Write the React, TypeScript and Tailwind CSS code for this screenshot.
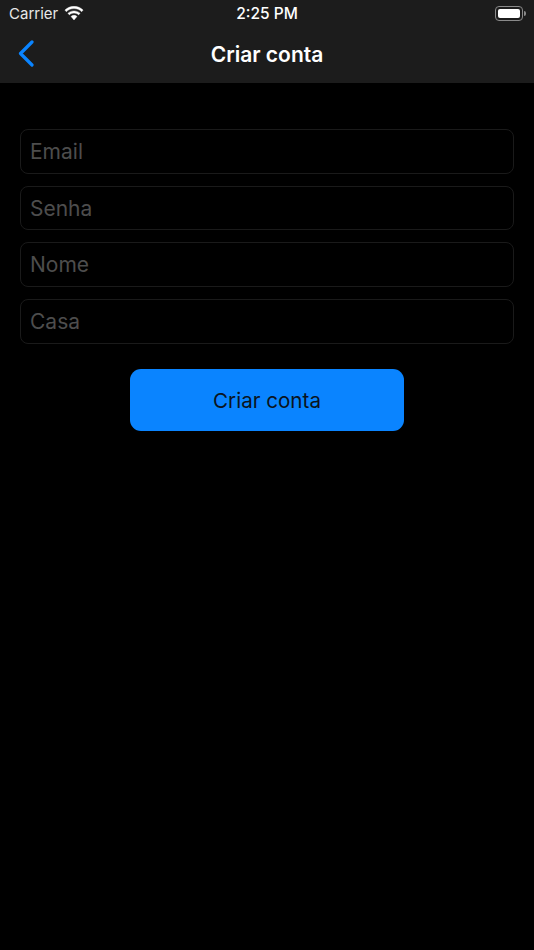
export default function App() {
  const fields = ["Email", "Senha", "Nome", "Casa"];
  return (
    <div className="w-[534px] h-[950px] bg-black flex flex-col font-['Inter','Liberation_Sans',sans-serif] overflow-hidden">
      <header className="h-[83px] bg-[#1c1c1c] flex flex-col shrink-0">
        <div className="h-[28px] px-[9px] grid grid-cols-3 items-center text-white text-[15px]">
          <div className="flex items-center gap-[6px]">
            <span className="text-[#e8e8e8]">Carrier</span>
            <svg width="20" height="15" viewBox="0 0 20 15" fill="white" stroke="white" strokeWidth="0.400" className="-mt-[2px]">
              <path d="M10 2.600c3 0 5.600 1.100 7.700 3.100l1.400-1.600C16.700 1.700 13.500.3 10 .3S3.300 1.700.9 4.100l1.400 1.600C4.400 3.700 7 2.600 10 2.600z" />
              <path d="M10 7.100c1.800 0 3.400.7 4.600 1.800l1.500-1.600C14.500 5.800 12.400 4.900 10 4.900s-4.500.9-6.100 2.400l1.500 1.600C6.600 7.800 8.200 7.100 10 7.100z" />
              <path d="M10 9.300c-1.200 0-2.200.5-3 1.200L10 14l3-3.500c-.8-.7-1.800-1.200-3-1.200z" />
            </svg>
          </div>
          <div className="text-center font-medium text-[15.500px]">2:25 PM</div>
          <div className="flex justify-end -mr-px">
            <div className="flex items-center -mt-[2px]">
              <div className="w-[28px] h-[15px] rounded-[4px] border border-[#8a8a8a] p-[2px]">
                <div className="w-full h-full rounded-[2px] bg-white" />
              </div>
              <div className="w-[2px] h-[5px] ml-px rounded-r-sm bg-[#8a8a8a]" />
            </div>
          </div>
        </div>
        <div className="flex-1 relative flex items-center justify-center">
          <svg className="absolute left-[17px] top-[11px]" width="18" height="28" viewBox="0 0 18 28" fill="none" stroke="#0a84ff" strokeWidth="3.200" strokeLinecap="round" strokeLinejoin="round">
            <path d="M15 3 L3.500 14.500 L15 26" />
          </svg>
          <h1 className="text-white text-[21px] font-semibold leading-none -mt-[2px]">Criar conta</h1>
        </div>
      </header>
      <main className="flex flex-col items-center px-5 pt-[46px]">
        <div className="w-full flex flex-col gap-3">
          {fields.map((f) => (
            <div key={f} className="h-[44.670px] rounded-[8px] border border-[#1a1a1a] pl-[9px] pt-px flex items-center text-[21px] text-[#4d4d4d]">
              {f}
            </div>
          ))}
        </div>
        <button className="mt-[25px] w-[274px] h-[62px] rounded-[11px] bg-[#0a84ff] text-[#0a1420] text-[20.600px] pt-[3px]">
          Criar conta
        </button>
      </main>
    </div>
  );
}
